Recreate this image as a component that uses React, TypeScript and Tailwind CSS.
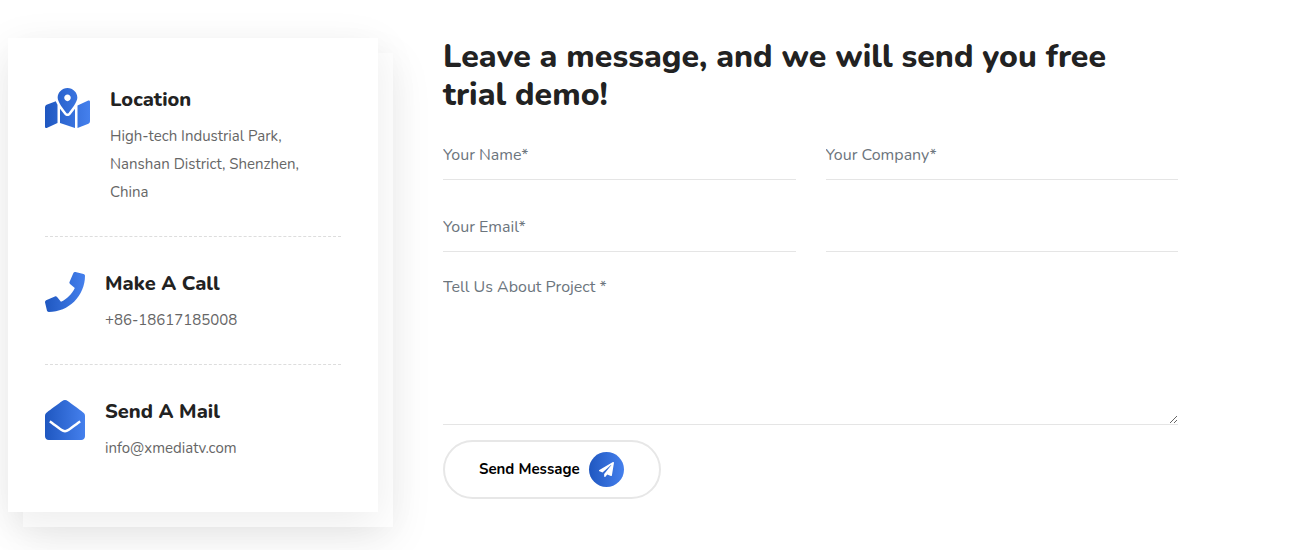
import clsx from 'clsx';
import { FaEnvelopeOpen, FaMapMarkedAlt, FaPaperPlane, FaPhone } from 'react-icons/fa';
import type { IconType } from 'react-icons';

interface ContactItem {
  icon: IconType;
  iconWidth: string;
  title: string;
  text: string;
}

const contactItems: ContactItem[] = [
  {
    icon: FaMapMarkedAlt,
    iconWidth: 'w-[45px]',
    title: 'Location',
    text: 'High-tech Industrial Park, Nanshan District, Shenzhen, China',
  },
  { icon: FaPhone, iconWidth: 'w-10', title: 'Make A Call', text: '+86-18617185008' },
  { icon: FaEnvelopeOpen, iconWidth: 'w-10', title: 'Send A Mail', text: 'info@xmediatv.com' },
];

const inputClass =
  'block w-full h-[54px] pt-1 border-b border-[#e5e5e5] bg-transparent text-base text-[#222] placeholder:text-[#6c757d] outline-none';

const ContactCard = () => {
  return (
    <div className="relative isolate">
      <div className="absolute inset-0 translate-x-[15px] translate-y-[15px] bg-white shadow-[0_10px_40px_rgba(0,0,0,0.08)]" />
      <div className="relative bg-white px-[37px] py-[50px] shadow-[0_10px_40px_rgba(0,0,0,0.08)]">
        {contactItems.map(({ icon: Icon, iconWidth, title, text }) => (
          <div
            key={title}
            className="flex items-start gap-5 pb-[30px] mb-[35px] border-b border-dashed border-[#ddd] last:mb-0 last:pb-0 last:border-b-0"
          >
            <Icon className={clsx('h-10 shrink-0', iconWidth)} fill="url(#brand)" />
            <div>
              <h3 className="text-[20px] leading-6 font-extrabold text-[#222]">{title}</h3>
              <p className="mt-[10px] pr-5 text-[15px] leading-7 text-[#666]">{text}</p>
            </div>
          </div>
        ))}
      </div>
    </div>
  );
};

const MessageForm = () => {
  return (
    <form onSubmit={e => e.preventDefault()}>
      <div className="grid grid-cols-2 gap-x-[30px] gap-y-[18px]">
        <input type="text" aria-label="Your Name" placeholder="Your Name*" className={inputClass} />
        <input type="text" aria-label="Your Company" placeholder="Your Company*" className={inputClass} />
        <input type="email" aria-label="Your Email" placeholder="Your Email*" className={inputClass} />
        <input type="text" aria-label="Phone" className={inputClass} />
        <textarea
          aria-label="Tell Us About Project"
          placeholder="Tell Us About Project *"
          className="col-span-2 block w-full h-[155px] pt-[5px] resize border-b border-[#e5e5e5] bg-transparent text-base text-[#222] placeholder:text-[#6c757d] outline-none"
        />
      </div>
      <button
        type="submit"
        className="mt-[15px] flex items-center gap-[9px] h-[59px] pl-[34px] pr-[35px] rounded-full border-2 border-[#e7e7e7] text-[15px] font-bold text-black"
      >
        Send Message
        <span className="flex items-center justify-center size-[35px] rounded-full bg-linear-to-r from-[#1f57c0] to-[#4580ed]">
          <FaPaperPlane className="size-[15px] text-white" />
        </span>
      </button>
    </form>
  );
};

const App = () => {
  return (
    <div className="min-h-screen max-w-[1178px] pl-2 pt-[38px] font-['Nunito','Lato',sans-serif]">
      <svg className="absolute size-0" aria-hidden="true">
        <linearGradient id="brand">
          <stop offset="0" stopColor="#1f57c0" />
          <stop offset="1" stopColor="#4580ed" />
        </linearGradient>
      </svg>
      <div className="grid grid-cols-3 items-start gap-[30px]">
        <ContactCard />
        <div className="col-span-2 pl-[35px]">
          <h2 className="mb-3 text-[32px] leading-[38px] font-extrabold text-[#222]">
            Leave a message, and we will send you free trial demo!
          </h2>
          <MessageForm />
        </div>
      </div>
    </div>
  );
};

export default App;
